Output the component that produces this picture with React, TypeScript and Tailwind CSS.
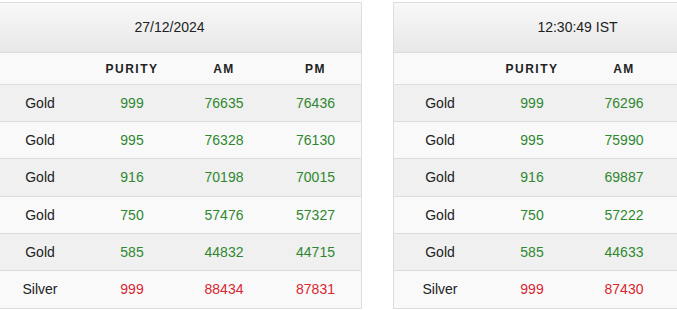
import React from 'react';

type Row = { metal: string; purity: string; am: string; pm?: string };

const leftRows: Row[] = [
  { metal: 'Gold', purity: '999', am: '76635', pm: '76436' },
  { metal: 'Gold', purity: '995', am: '76328', pm: '76130' },
  { metal: 'Gold', purity: '916', am: '70198', pm: '70015' },
  { metal: 'Gold', purity: '750', am: '57476', pm: '57327' },
  { metal: 'Gold', purity: '585', am: '44832', pm: '44715' },
  { metal: 'Silver', purity: '999', am: '88434', pm: '87831' },
];

// right table runs past the window edge, PM column isn't visible
const rightRows: Row[] = [
  { metal: 'Gold', purity: '999', am: '76296' },
  { metal: 'Gold', purity: '995', am: '75990' },
  { metal: 'Gold', purity: '916', am: '69887' },
  { metal: 'Gold', purity: '750', am: '57222' },
  { metal: 'Gold', purity: '585', am: '44633' },
  { metal: 'Silver', purity: '999', am: '87430' },
];

// row heights so the lines land where the reference has them
const rowHeights = ['h-[37px]', 'h-[37px]', 'h-[38px]', 'h-[37px]', 'h-[37px]', 'h-[37px]'];

function RateTable({
  title,
  rows,
  titleClass,
  showPm,
}: {
  title: string;
  rows: Row[];
  titleClass: string;
  showPm: boolean;
}) {
  return (
    <div className="w-[369px] shrink-0 border border-[#dddddd] bg-white">
      <div
        className={`h-[50px] flex items-center justify-center border-b border-[#dddddd] bg-gradient-to-b from-[#f8f8f8] to-[#e8e8e8] text-[14px] text-[#222] ${titleClass}`}
      >
        {title}
      </div>
      <div className="h-[32px] grid grid-cols-[92px_92px_92px_1fr] items-center border-b border-[#dddddd] bg-[#f9f9f9] text-[12px] font-bold tracking-[1.5px] text-[#222] text-center">
        <div />
        <div>PURITY</div>
        <div>AM</div>
        <div>{showPm ? 'PM' : ''}</div>
      </div>
      {rows.map((r, i) => {
        const tone = r.metal === 'Silver' ? 'text-[#d9262f]' : 'text-[#2f882f]';
        return (
          <div
            key={i}
            className={`${rowHeights[i]} grid grid-cols-[92px_92px_92px_1fr] items-center text-center text-[14px] ${
              i < rows.length - 1 ? 'border-b border-[#dddddd]' : ''
            } ${i % 2 === 0 ? 'bg-[#f0f0f0]' : 'bg-[#f9f9f9]'}`}
          >
            <div className="text-[#222]">{r.metal}</div>
            <div className={tone}>{r.purity}</div>
            <div className={tone}>{r.am}</div>
            <div className={tone}>{showPm ? r.pm : ''}</div>
          </div>
        );
      })}
    </div>
  );
}

export default function App() {
  return (
    <div className="w-[677px] h-[310px] overflow-hidden bg-white font-['Liberation_Sans',Arial,sans-serif]">
      <div className="flex gap-[31px] ml-[-7px] pt-[2px]">
        <RateTable title="27/12/2024" rows={leftRows} titleClass="pr-4" showPm />
        <RateTable title="12:30:49 IST" rows={rightRows} titleClass="" showPm={false} />
      </div>
    </div>
  );
}
